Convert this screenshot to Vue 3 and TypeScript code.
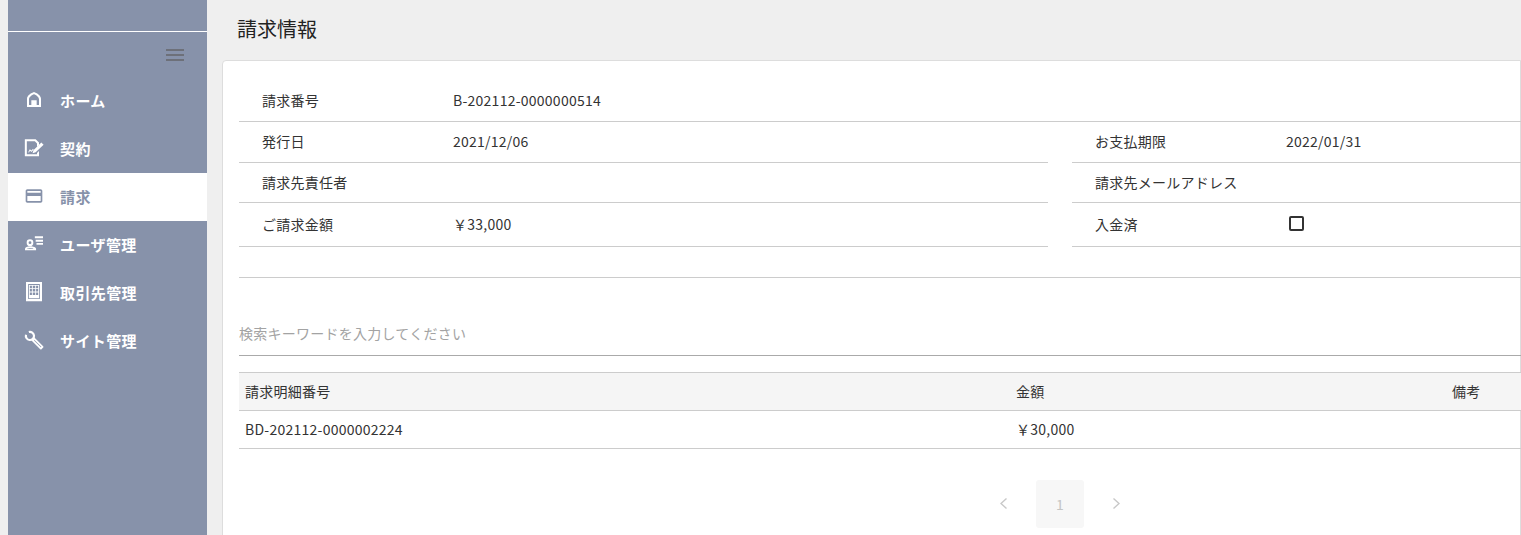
<template>
  <div class="page">
    <!-- Sidebar -->
    <aside class="sidebar">
      <div class="brand"></div>
      <div class="toggle">
        <span class="burger"><i></i><i></i><i></i></span>
      </div>
      <nav>
        <a v-for="item in menu" :key="item.label" class="nav-item" :class="{ active: item.active }">
          <svg class="nav-icon" viewBox="0 0 24 24" fill="currentColor" fill-rule="evenodd" v-html="item.icon"></svg>
          <span>{{ item.label }}</span>
        </a>
      </nav>
    </aside>

    <main class="main">
      <h1 class="heading">請求情報</h1>

      <section class="card">
        <div class="content">
          <!-- Billing info -->
          <div class="row full">
            <span class="label">請求番号</span>
            <span>B-202112-0000000514</span>
          </div>
          <div class="pairs">
            <div v-for="cell in info" :key="cell.label" class="row" :class="cell.cls">
              <span class="label">{{ cell.label }}</span>
              <span v-if="cell.value">{{ cell.value }}</span>
              <span v-if="cell.check" class="check"></span>
            </div>
          </div>
          <div class="spacer"></div>

          <div class="search">検索キーワードを入力してください</div>

          <!-- Detail table -->
          <table class="detail">
            <colgroup>
              <col class="col-a" />
              <col class="col-b" />
              <col />
            </colgroup>
            <thead>
              <tr>
                <th>請求明細番号</th>
                <th>金額</th>
                <th>備考</th>
              </tr>
            </thead>
            <tbody>
              <tr v-for="line in lines" :key="line.no">
                <td>{{ line.no }}</td>
                <td>{{ line.amount }}</td>
                <td></td>
              </tr>
            </tbody>
          </table>

          <div class="pager">
            <svg class="arrow" viewBox="0 0 10 12"><path d="M6.500 .5 1 5.500l5.500 5" /></svg>
            <span class="page-no">1</span>
            <svg class="arrow" viewBox="0 0 10 12"><path d="M3.500 .5 9 5.500l-5.500 5" /></svg>
          </div>
        </div>
      </section>
    </main>
  </div>
</template>

<script setup lang="ts">
type MenuItem = { label: string; icon: string; active?: boolean }
type InfoCell = { label: string; value?: string; check?: boolean; cls?: string }

const menu: MenuItem[] = [
  {
    label: 'ホーム',
    icon: '<path d="M12 2.400c3 1 8.400 4.100 8.400 8.100v9.900H3.600v-9.900c0-4 5.400-7.100 8.400-8.100zm0 2.700C9.500 6 6 8.500 6 11v7h2.800v-5.600h6.400V18H18v-7c0-2.500-3.500-5-6-5.900z"/>',
  },
  {
    label: '契約',
    icon: '<path d="M1 1.500h13l4 4v3l-2.400 2.400V6.500l-2.600-2.600H3.400v15.700h12.200v-1.500l2.400-2.400V22H1z"/><path d="M20.800 5.500 23.500 8.200 14 17.200l-3.700 1 1-3.600zM5 17l2-3.500 2 1.500 1.800-2 .8.800-2.500 2.900-1.900-1.400-1.200 2.200z"/>',
  },
  {
    label: '請求',
    active: true,
    icon: '<path d="M20 4H4c-1.110 0-1.990.89-1.990 2L2 18c0 1.110.89 2 2 2h16c1.110 0 2-.89 2-2V6c0-1.110-.89-2-2-2zm0 14H4v-6h16v6zm0-10H4V6h16v2z"/>',
  },
  {
    label: 'ユーザ管理',
    icon: '<path d="M7.200 6.400a4 4 0 1 1 0 8 4 4 0 0 1 0-8zm0 2.300a1.700 1.700 0 1 0 0 3.400 1.700 1.700 0 0 0 0-3.400zM7.500 14.800c3.500 0 7 1.200 7 3v1.800H1.200v-1.800c0-1.800 2.800-3 6.300-3zm0 2.100c-1.800 0-3.300.3-3.800.7h7.600c-.5-.4-2-.7-3.800-.7z"/><path d="M13 2.800h9.800v2.200H13zM14 6.900h8.800v2.300H14zM15 10.800h7.800v2.200H15z"/>',
  },
  {
    label: '取引先管理',
    icon: '<path d="M2.400 0h19.200v23H2.400zM5 2.500v18h14v-18z"/><path d="M6 3.500h12v16H6zm1 1v3h2.500v-3zm3.500 0v3H13.500v-3zm4 0v3H17v-3zM7 8.500v3h2.500v-3zm3.500 0v3H13.500v-3zm4 0v3H17v-3zM7 12.500v3h2.500v-3zm3.500 0v3H13.500v-3zm4 0v3H17v-3z"/>',
  },
  {
    label: 'サイト管理',
    icon: '<path fill="none" stroke="currentColor" stroke-width="2.600" d="M5.800 2.400A4.900 4.900 0 1 1 2.400 5.800"/><path d="M9 12.500 12.500 9 23 19.500c.5.700.5 1 0 1.500l-2 2c-.5.500-.8.500-1.500 0zM12.500 12l-.5.500 8.200 8.300.6-.6z"/>',
  },
]

const info: InfoCell[] = [
  { label: '発行日', value: '2021/12/06' },
  { label: 'お支払期限', value: '2022/01/31' },
  { label: '請求先責任者' },
  { label: '請求先メールアドレス' },
  { label: 'ご請求金額', value: '￥33,000', cls: 'tall' },
  { label: '入金済', check: true, cls: 'tall' },
]

const lines = [{ no: 'BD-202112-0000002224', amount: '￥30,000' }]
</script>

<style>
html,
body {
  margin: 0;
  overflow: hidden;
}
</style>

<style scoped>
.page {
  display: flex;
  height: 535px;
  overflow: hidden;
  padding-left: 8px;
  background: #efefef;
  color: #333;
  font-family: "Noto Sans CJK JP", "Noto Sans", sans-serif;
  font-size: 14px;
  letter-spacing: 0.25px;
}

.sidebar {
  flex: 0 0 199px;
  background: #8792aa;
}

.brand {
  height: 31px;
  border-bottom: 1px solid #fff;
}

.toggle {
  display: flex;
  justify-content: flex-end;
  padding: 17px 23px 0 0;
  height: 28px;
}

.burger {
  display: flex;
  flex-direction: column;
  gap: 3px;
  width: 18px;
}

.burger i {
  display: block;
  height: 2px;
  background: #6d7079;
}

.nav-item {
  display: flex;
  align-items: center;
  height: 48px;
  box-sizing: border-box;
  padding: 0 0 2px 16px;
  color: #fff;
  font-size: 15px;
  font-weight: 700;
  letter-spacing: 0.4px;
}

.nav-item.active {
  background: #fff;
  color: #8792aa;
}

.nav-icon {
  width: 20px;
  height: 20px;
  margin-right: 16px;
}

.main {
  flex: 1;
  min-width: 0;
}

.heading {
  margin: 0;
  height: 60px;
  padding: 14px 0 0 30px;
  box-sizing: border-box;
  font-size: 20px;
  font-weight: 400;
  line-height: 29px;
  color: #222;
  letter-spacing: 0;
}

.card {
  margin-left: 15px;
  height: 600px;
  background: #fff;
  border: 1px solid #ddd;
  border-radius: 4px 0 0 4px;
  padding: 20px 0 0 16px;
}

.content {
  width: 1642px;
}

.row {
  display: flex;
  align-items: center;
  height: 41px;
  box-sizing: border-box;
  padding-bottom: 2px;
  border-bottom: 1px solid #ccc;
}

.label {
  flex: 0 0 191px;
  padding-left: 23px;
}

.pairs {
  display: grid;
  grid-template-columns: 809px 809px;
  column-gap: 24px;
}

.pairs .row:nth-child(n + 3) {
  height: 40px;
}

.pairs .row.tall {
  height: 44px;
}

.check {
  width: 11px;
  height: 11px;
  margin: -1px 0 0 2.5px;
  border: 2px solid #333;
  border-radius: 2px;
}

.spacer {
  height: 30px;
  border-bottom: 1px solid #ccc;
}

.search {
  margin-top: 43px;
  height: 34px;
  border-bottom: 1px solid #aaa;
  color: #a3a3a3;
  line-height: 25px;
}

.detail {
  width: 100%;
  margin-top: 16px;
  table-layout: fixed;
  border-collapse: collapse;
}

.col-a {
  width: 770px;
}

.col-b {
  width: 436px;
}

.detail th,
.detail td {
  height: 35px;
  box-sizing: content-box;
  padding: 0 7px 2px;
  text-align: left;
  font-weight: 400;
  border-top: 1px solid #ccc;
  border-bottom: 1px solid #ccc;
}

.detail th:first-child,
.detail td:first-child {
  padding-left: 6px;
}

.detail th {
  background: #f5f5f5;
}

.pager {
  display: flex;
  justify-content: center;
  align-items: center;
  gap: 26px;
  margin-top: 31px;
}

.page-no {
  display: flex;
  align-items: center;
  justify-content: center;
  width: 48px;
  height: 48px;
  border-radius: 3px;
  background: #f7f7f7;
  color: #c4c4c4;
}

.arrow {
  width: 10px;
  height: 12px;
  fill: none;
  stroke: #c8c8c8;
  stroke-width: 1.4;
}
</style>
